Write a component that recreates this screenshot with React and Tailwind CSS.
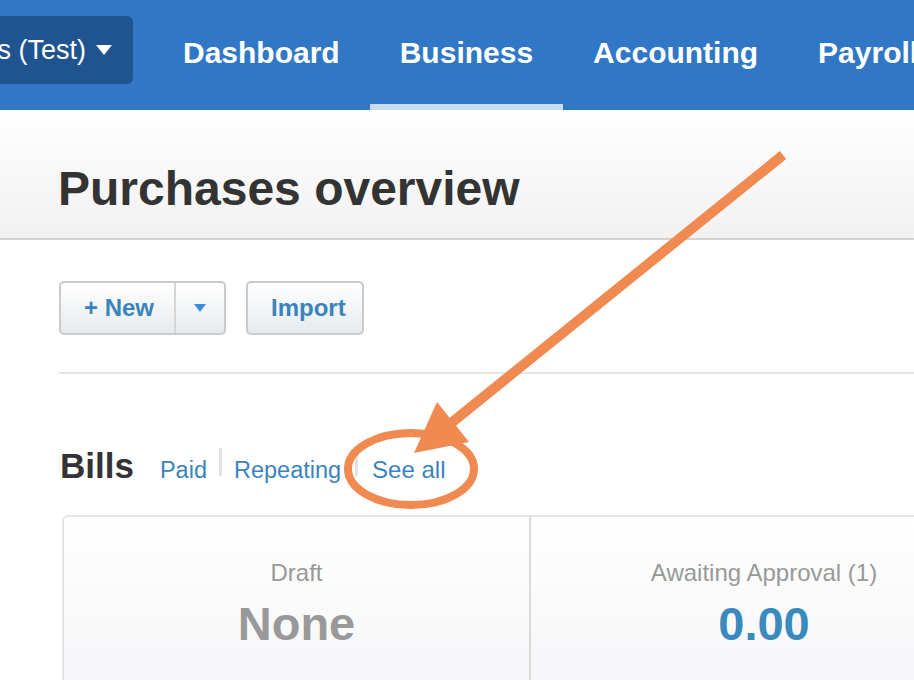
import React from 'react';

const navItems = ['Dashboard', 'Business', 'Accounting', 'Payroll'];

const Annotation = () => (
    <svg className="absolute inset-0 pointer-events-none" width="914" height="680" viewBox="0 0 914 680">
        {/* arrow shaft */}
        <line x1="783" y1="155" x2="450" y2="424" stroke="#f08a50" strokeWidth="10" />
        {/* arrow head */}
        <polygon points="437,402 469,442 414,453" fill="#f08a50" />
        {/* circle round "See all" */}
        <ellipse cx="411" cy="469" rx="63" ry="36" fill="none" stroke="#f08a50" strokeWidth="8" />
    </svg>
);

const App = () => {
    return (
        <div className="relative w-[914px] h-[680px] overflow-hidden bg-white font-['Liberation_Sans',Arial,sans-serif]">
            {/* top navigation */}
            <div className="h-[110px] bg-[#3078c5] flex items-stretch">
                <div className="pt-[16px] shrink-0">
                    <button className="h-[68px] w-[133px] overflow-hidden whitespace-nowrap bg-[#1f5490] rounded-r-md flex items-center text-white text-[27px] pr-[21px] justify-end">
                        <span>s (Test)</span>
                        <span className="ml-[10px] shrink-0 w-0 h-0 border-l-[8px] border-r-[8px] border-t-[10px] border-l-transparent border-r-transparent border-t-white"></span>
                    </button>
                </div>
                <nav className="flex ml-[20px] whitespace-nowrap">
                    {navItems.map((item) => (
                        <a
                            key={item}
                            href="#"
                            className={`px-[30px] flex items-center text-white font-bold text-[30px] border-b-[6px] ${item === 'Business' ? 'border-[#c5dbf0]' : 'border-transparent'}`}
                        >
                            {item}
                        </a>
                    ))}
                </nav>
            </div>

            {/* page title */}
            <div className="h-[130px] bg-gradient-to-b from-white to-[#f1f1f1] border-b-2 border-[#d3d3d3] flex items-center pl-[58px] pt-[30px]">
                <h1 className="text-[48px] font-bold text-[#333]">Purchases overview</h1>
            </div>

            <div className="pl-[60px]">
                {/* actions */}
                <div className="flex items-center gap-[20px] pt-[41px] pb-[37px] border-b-2 border-[#e5e5e5] -ml-px">
                    <div className="flex h-[54px] rounded-[5px] border-2 border-[#cacaca] bg-gradient-to-b from-white to-[#e7eaed]">
                        <button className="pl-[23px] pr-[20px] text-[24px] font-bold text-[#3a84bd] border-r-2 border-[#d6d6d6]">+ New</button>
                        <button className="w-[48px] flex items-center justify-center">
                            <span className="w-0 h-0 border-l-[6px] border-r-[6px] border-t-[8px] border-l-transparent border-r-transparent border-t-[#3a8ee0]"></span>
                        </button>
                    </div>
                    <button className="h-[54px] pl-[23px] pr-[16px] rounded-[5px] border-2 border-[#cacaca] bg-gradient-to-b from-white to-[#e7eaed] text-[24px] font-bold text-[#3a84bd]">
                        Import
                    </button>
                </div>

                {/* bills heading */}
                <div className="flex items-baseline mt-[66px] h-[40px]">
                    <h2 className="text-[35px] font-bold text-[#333] mr-[26px]">Bills</h2>
                    <a href="#" className="text-[23.5px] text-[#3a84bd]">Paid</a>
                    <span className="mx-[12px] w-[3px] h-[28px] bg-[#e2e2e2] self-center translate-y-[2px]"></span>
                    <a href="#" className="text-[23.5px] text-[#3a84bd]">Repeating</a>
                    <span className="mx-[14px] w-[3px] h-[28px] bg-[#e2e2e2] self-center translate-y-[2px]"></span>
                    <a href="#" className="text-[24px] text-[#3a84bd]">See all</a>
                </div>

                {/* summary cards */}
                <div className="ml-[2px] mt-[35px] w-[940px] h-[200px] flex rounded-t-[6px] border-2 border-[#e4e4e4] bg-gradient-to-b from-white to-[#f3f4f6]">
                    <div className="w-[467px] border-r-2 border-[#dadada] flex flex-col items-center pt-[38px]">
                        <span className="text-[24px] text-[#999]">Draft</span>
                        <span className="text-[47px] font-bold text-[#999] leading-none mt-[9px]">None</span>
                    </div>
                    <div className="w-[466px] flex flex-col items-center pt-[38px]">
                        <span className="text-[24px] text-[#999]">Awaiting Approval (1)</span>
                        <span className="text-[47px] font-bold text-[#3a8abf] leading-none mt-[9px]">0.00</span>
                    </div>
                </div>
            </div>

            <Annotation />
        </div>
    );
};

export default App;
